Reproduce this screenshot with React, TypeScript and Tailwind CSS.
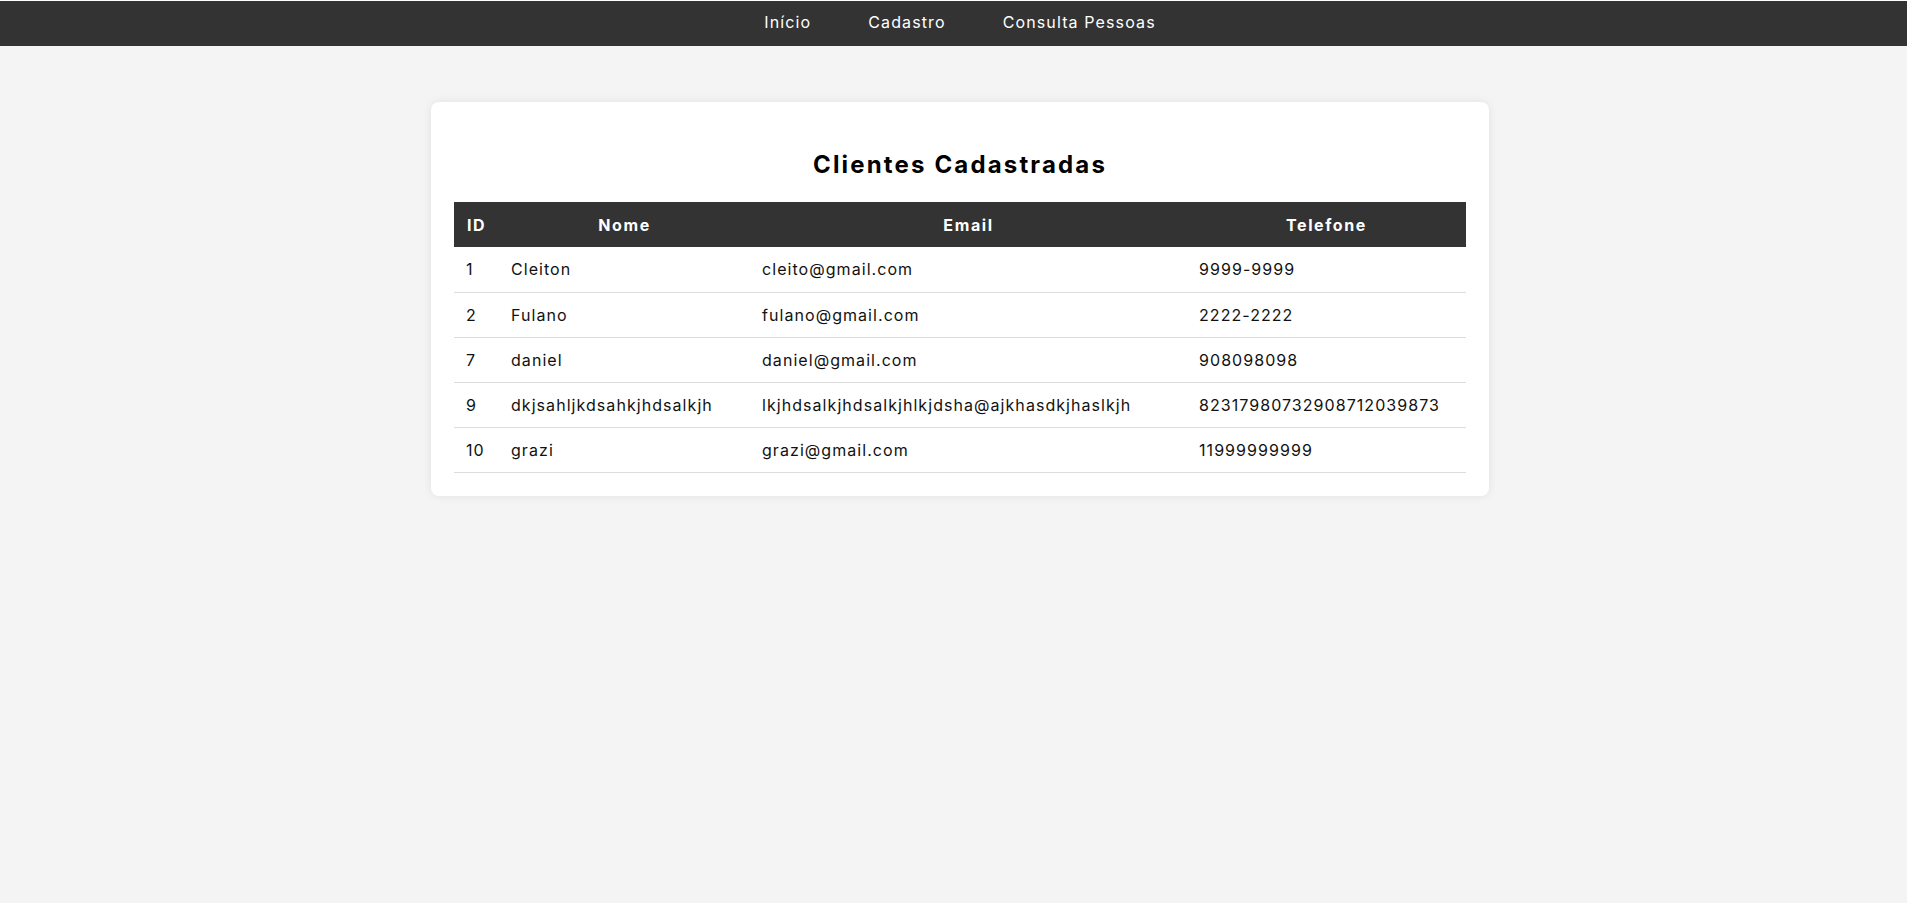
import React from 'react';

type Cliente = {
  id: number;
  nome: string;
  email: string;
  telefone: string;
};

const clientes: Cliente[] = [
  { id: 1, nome: 'Cleiton', email: 'cleito@gmail.com', telefone: '9999-9999' },
  { id: 2, nome: 'Fulano', email: 'fulano@gmail.com', telefone: '2222-2222' },
  { id: 7, nome: 'daniel', email: 'daniel@gmail.com', telefone: '908098098' },
  {
    id: 9,
    nome: 'dkjsahljkdsahkjhdsalkjh',
    email: 'lkjhdsalkjhdsalkjhlkjdsha@ajkhasdkjhaslkjh',
    telefone: '82317980732908712039873',
  },
  { id: 10, nome: 'grazi', email: 'grazi@gmail.com', telefone: '11999999999' },
];

const links = ['Início', 'Cadastro', 'Consulta Pessoas'];

const Navbar = () => (
  <nav className="mt-px h-[45px] bg-[#333333]">
    <ul className="flex h-full items-center justify-center gap-[57px] pb-[3px] pl-[13px]">
      {links.map((label) => (
        <li key={label}>
          <a href="#" className="text-[16px] tracking-[0.07em] text-white">
            {label}
          </a>
        </li>
      ))}
    </ul>
  </nav>
);

const ClientesTable = () => (
  <table className="w-full table-fixed border-collapse text-[16px] tracking-[0.066em]">
    <thead>
      <tr className="h-[45px] bg-[#333333] text-white">
        <th className="w-[45px] font-bold tracking-[0.1em]">ID</th>
        <th className="w-[251px] font-bold tracking-[0.1em]">Nome</th>
        <th className="w-[437px] font-bold tracking-[0.1em]">Email</th>
        <th className="font-bold tracking-[0.1em]">Telefone</th>
      </tr>
    </thead>
    <tbody>
      {clientes.map((c) => (
        <tr key={c.id} className="h-[45px] border-b border-[#dddddd] text-[#111111]">
          <td className="px-3 whitespace-nowrap">{c.id}</td>
          <td className="px-3 whitespace-nowrap">{c.nome}</td>
          <td className="px-3 whitespace-nowrap">{c.email}</td>
          <td className="px-3 whitespace-nowrap">{c.telefone}</td>
        </tr>
      ))}
    </tbody>
  </table>
);

export default function App() {
  return (
    <div className="min-h-[903px] bg-[#f4f4f4] font-['Inter',sans-serif]">
      <Navbar />
      <main className="flex justify-center pt-[56px] pl-[13px]">
        <section className="w-[1058px] rounded-lg bg-white p-[23px] shadow-[0_0_10px_rgba(0,0,0,0.08)]">
          <h2 className="mt-[25px] mb-[22px] h-[30px] text-center text-[24px] leading-[30px] font-bold tracking-[0.09em] text-black">
            Clientes Cadastradas
          </h2>
          <ClientesTable />
        </section>
      </main>
    </div>
  );
}
